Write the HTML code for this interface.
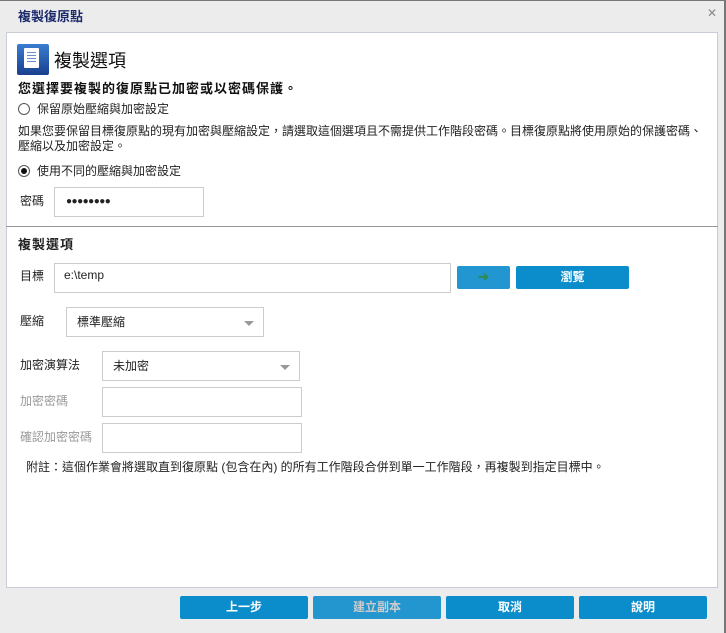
<!DOCTYPE html><html><head><meta charset="utf-8"><style>
*{margin:0;padding:0;box-sizing:border-box}
body{width:726px;height:633px;background:#ececec;font-family:"Liberation Sans","Noto Sans CJK TC",sans-serif;font-size:12px;color:#222;position:relative;overflow:hidden;border-top:1px solid #777;border-right:2px solid #777}
.a{position:absolute;white-space:nowrap}
.panel{position:absolute;left:6px;top:31px;width:712px;height:556px;background:#fff;border:1px solid #c8ccd4}
.in{position:absolute;border:1px solid #ccc;background:#fff}
.btn{position:absolute;background:#0c8dcb;color:#fff;font-weight:bold;text-align:center;line-height:22px;height:23px;border-radius:2px;font-size:12px}
.rad{position:absolute;width:12px;height:12px;border:1px solid #555;border-radius:50%;background:#fff}
.arr{position:absolute;right:9px;top:13px;border-left:5px solid transparent;border-right:5px solid transparent;border-top:5px solid #999}
</style></head><body>
<div class="a" style="left:18px;top:5px;font-size:13px;font-weight:bold;color:#1b2a6b">複製復原點</div>
<div class="a" style="left:707px;top:5px;font-size:12px;color:#888">✕</div>
<div class="panel"></div>
<div class="a" style="left:17px;top:43px;width:32px;height:31px;background:linear-gradient(#3a7dd0,#1a3f8e);border-radius:2px"></div>
<div class="a" style="left:24px;top:47px;width:15px;height:20px;background:#fff;border-radius:1px"></div>
<div class="a" style="left:27px;top:51px;width:9px;height:12px;background:repeating-linear-gradient(#6a8fcf 0 1px,#fff 1px 3px)"></div>
<div class="a" style="left:54px;top:46px;font-size:18px;color:#111">複製選項</div>
<div class="a" style="left:18px;top:77px;font-size:13px;font-weight:bold;color:#111;letter-spacing:1px">您選擇要複製的復原點已加密或以密碼保護。</div>
<div class="rad" style="left:18px;top:102px"></div>
<div class="a" style="left:37px;top:99px">保留原始壓縮與加密設定</div>
<div class="a" style="left:18px;top:121px">如果您要保留目標復原點的現有加密與壓縮設定，請選取這個選項且不需提供工作階段密碼。目標復原點將使用原始的保護密碼、</div>
<div class="a" style="left:18px;top:136px">壓縮以及加密設定。</div>
<div class="rad" style="left:18px;top:164px"></div><div class="a" style="left:21px;top:167px;width:6px;height:6px;border-radius:50%;background:#111"></div>
<div class="a" style="left:37px;top:161px">使用不同的壓縮與加密設定</div>
<div class="a" style="left:20px;top:191px">密碼</div>
<div class="in" style="left:54px;top:186px;width:150px;height:30px"></div>
<div class="a" style="left:66px;top:195px;font-size:10px;letter-spacing:-0.5px">●●●●●●●●</div>
<div class="a" style="left:6px;top:225px;width:712px;height:1px;background:#999"></div>
<div class="a" style="left:18px;top:233px;font-size:13px;font-weight:bold;letter-spacing:1px">複製選項</div>
<div class="a" style="left:20px;top:266px">目標</div>
<div class="in" style="left:54px;top:262px;width:397px;height:30px"></div>
<div class="a" style="left:64px;top:267px">e:\temp</div>
<div class="btn" style="left:457px;top:265px;width:53px;background:#2196d0;color:#2e8b57;font-size:13px">➔</div>
<div class="btn" style="left:516px;top:265px;width:113px">瀏覽</div>
<div class="a" style="left:20px;top:311px">壓縮</div>
<div class="in" style="left:66px;top:306px;width:198px;height:30px"><span class="a" style="left:10px;top:5px">標準壓縮</span><div class="arr"></div></div>
<div class="a" style="left:20px;top:355px">加密演算法</div>
<div class="in" style="left:102px;top:350px;width:198px;height:30px"><span class="a" style="left:10px;top:5px">未加密</span><div class="arr"></div></div>
<div class="a" style="left:20px;top:391px;color:#999">加密密碼</div>
<div class="in" style="left:102px;top:386px;width:200px;height:30px"></div>
<div class="a" style="left:20px;top:427px;color:#999">確認加密密碼</div>
<div class="in" style="left:102px;top:422px;width:200px;height:30px"></div>
<div class="a" style="left:26px;top:457px">附註：這個作業會將選取直到復原點 (包含在內) 的所有工作階段合併到單一工作階段，再複製到指定目標中。</div>
<div class="btn" style="left:180px;top:595px;width:128px">上一步</div>
<div class="btn" style="left:313px;top:595px;width:128px;background:#2496cf;color:#ccc">建立副本</div>
<div class="btn" style="left:446px;top:595px;width:128px">取消</div>
<div class="btn" style="left:579px;top:595px;width:128px">說明</div>
</body></html>
